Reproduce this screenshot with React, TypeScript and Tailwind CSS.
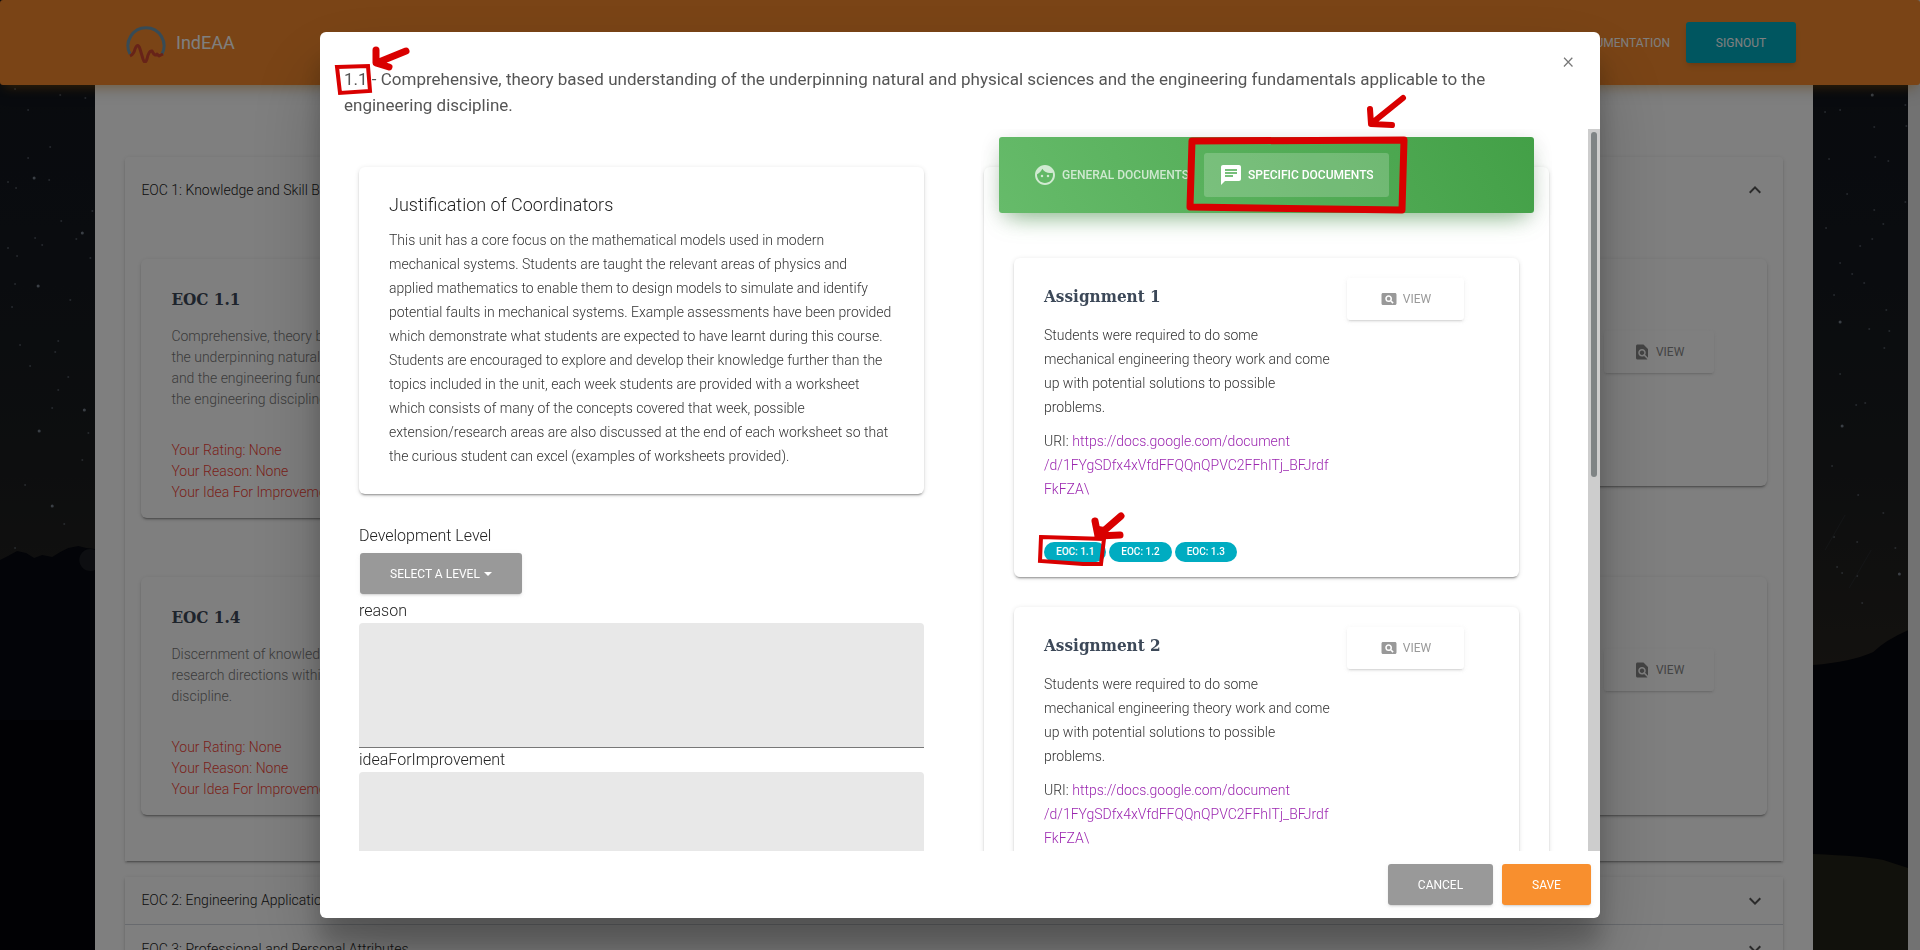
import React from "react";
import { MdFace, MdChat, MdPageview, MdFindInPage, MdExpandLess, MdExpandMore } from "react-icons/md";

const CARD_SHADOW =
  "shadow-[0_2px_2px_0_rgba(0,0,0,0.14),0_3px_1px_-2px_rgba(0,0,0,0.2),0_1px_5px_0_rgba(0,0,0,0.12)]";
const BUTTON_SHADOW =
  "shadow-[0_2px_2px_0_rgba(153,153,153,0.14),0_3px_1px_-2px_rgba(153,153,153,0.2),0_1px_5px_0_rgba(153,153,153,0.12)]";
const SLAB = "font-['Roboto_Slab','DejaVu_Serif_Condensed','DejaVu_Serif',serif]";

const LEFT_STARS: [number, number, number][] = [
  [15, 89, 1], [28, 110, 1], [60, 95, 1], [85, 98, 1], [50, 147, 1], [28, 158, 1], [34, 178, 2], [8, 182, 1],
  [16, 188, 1], [49, 180, 1], [92, 211, 1], [61, 221, 1], [82, 233, 2], [35, 238, 1], [42, 245, 1], [8, 248, 1],
  [17, 256, 1], [76, 239, 1], [90, 258, 1], [38, 286, 2], [15, 284, 1], [12, 307, 1], [58, 341, 1], [55, 352, 1],
  [30, 366, 1], [52, 408, 1], [84, 410, 2], [39, 431, 2], [58, 390, 1], [68, 377, 1], [82, 460, 1], [25, 485, 1],
  [52, 506, 2], [15, 548, 1], [64, 524, 1], [88, 433, 1], [20, 345, 1], [70, 300, 1],
];
const RIGHT_STARS: [number, number, number][] = [
  [27, 110, 1], [59, 95, 2], [12, 112, 1], [92, 105, 1], [61, 127, 1], [93, 126, 1], [16, 159, 1], [62, 157, 1],
  [75, 161, 1], [34, 194, 1], [92, 202, 1], [61, 210, 1], [70, 224, 1], [13, 228, 1], [59, 239, 1], [47, 246, 1],
  [27, 263, 1], [39, 274, 1], [51, 283, 1], [21, 295, 1], [73, 310, 1], [27, 322, 2], [56, 329, 1], [76, 331, 1],
  [71, 348, 1], [27, 374, 1], [43, 405, 1], [52, 403, 1], [29, 426, 2], [19, 466, 1], [45, 495, 1], [70, 513, 1],
  [21, 537, 1], [44, 542, 1], [82, 548, 1], [24, 567, 1], [29, 573, 1], [86, 574, 2], [44, 576, 1], [49, 603, 1],
];

function Stars({ items }: { items: [number, number, number][] }) {
  return (
    <g fill="#7f8a96">
      {items.map(([x, y, r]) => (
        <circle key={`${x}-${y}`} cx={x} cy={y} r={r === 2 ? 1.5 : 1} opacity={r === 2 ? 0.9 : 0.5} />
      ))}
    </g>
  );
}

function NightSky({ side }: { side: "left" | "right" }) {
  const left = side === "left";
  return (
    <svg className="block h-screen w-full" viewBox="0 0 95 950" preserveAspectRatio="none" aria-hidden="true">
      <defs>
        <linearGradient id={`sky-${side}`} x1="0" y1="0" x2="0" y2="1">
          <stop offset="0" stopColor="#10141c" />
          <stop offset="0.3" stopColor="#15191f" />
          <stop offset="0.5" stopColor="#1b1d1f" />
          <stop offset="0.7" stopColor="#26231e" />
        </linearGradient>
      </defs>
      <rect width="95" height="950" fill={`url(#sky-${side})`} />
      {left ? (
        <>
          <Stars items={LEFT_STARS} />
          <path
            d="M0 560 L8 556 L17 551 L26 553 L34 558 L42 555 L52 557 L60 552 L68 548 L78 546 L86 548 L95 549 V950 H0Z"
            fill="#060810"
          />
          <circle cx="90" cy="560" r="11" fill="#1a1d22" />
          <path d="M0 720 H95 V950 H0Z" fill="#030308" />
        </>
      ) : (
        <>
          <Stars items={RIGHT_STARS} />
          <path d="M32 515 L12 550 M58 550 L36 588" stroke="#2c2f33" strokeWidth="0.7" />
          <path d="M0 665 Q38 662 60 652 Q72 640 95 630 V870 H0Z" fill="#05060c" />
          <path d="M0 854 Q50 856 70 860 Q82 864 95 868 V950 H0Z" fill="#232218" />
        </>
      )}
    </svg>
  );
}

function EocCard({ title, text }: { title: string; text: string }) {
  return (
    <article className={`rounded-md bg-white px-[30px] pt-7 pb-[15px] ${CARD_SHADOW}`}>
      <div className="w-[300px]">
        <h4 className={`${SLAB} text-[17px] leading-6 font-bold text-[#3c4858]`}>{title}</h4>
        <p className="mt-[15px] text-[14px] leading-[21px] text-[#777]">{text}</p>
        <p className="mt-[30px] text-[14px] leading-[21px] text-[#f44336]">
          Your Rating: None
          <br />
          Your Reason: None
          <br />
          Your Idea For Improvement: None
        </p>
      </div>
    </article>
  );
}

function EocViewCard({ children }: { children?: React.ReactNode }) {
  return (
    <article className={`flex min-h-[227px] items-start justify-end rounded-md bg-white px-[53px] pt-[72px] ${CARD_SHADOW}`}>
      <button
        type="button"
        className={`flex h-[42px] w-[110px] items-center justify-center gap-[5px] rounded-[3px] bg-white text-[12px] font-normal text-[#888] ${BUTTON_SHADOW}`}
      >
        <MdFindInPage size={18} />
        VIEW
      </button>
      {children}
    </article>
  );
}

function AccordionRow({ children }: { children: React.ReactNode }) {
  return (
    <button type="button" className="flex h-12 w-full items-center justify-between px-4 text-left text-[14px] text-[#222]">
      <span>{children}</span>
      <MdExpandMore size={24} className="text-[#555]" />
    </button>
  );
}

function DocumentCard({ title }: { title: string }) {
  return (
    <article className={`rounded-md bg-white px-[30px] pt-5 pb-[15px] ${CARD_SHADOW}`}>
      <div className="flex">
        <div className="w-[303px] text-[14px] leading-[24px] text-[#333]">
          <h4 className={`${SLAB} mt-[6px] text-[17px] font-bold text-[#3c4858]`}>{title}</h4>
          <p className="mt-[15px] w-[287px]">
            Students were required to do some mechanical engineering theory work and come up with potential solutions to
            possible problems.
          </p>
          <p className="mt-[10px] w-[287px]">
            URI:{" "}
            <a href="#document" className="break-words text-[#9c27b0]">
              https://docs.google.com/document
              <wbr />
              /d/1FYgSDfx4xVfdFFQQnQPVC2FFhITj_BFJrdf
              <wbr />
              FkFZA\
            </a>
          </p>
        </div>
        <button
          type="button"
          className={`flex h-[42px] w-[117px] items-center justify-center gap-[5px] rounded-[3px] bg-white text-[12px] font-normal text-[#999] ${BUTTON_SHADOW}`}
        >
          <MdPageview size={18} />
          VIEW
        </button>
      </div>
      <ul className="mt-[41px] flex gap-[3px] text-[10px] leading-5 font-medium text-white">
        <li className="relative rounded-full bg-[#00acc1] px-3">
          EOC: 1.1
          {title === "Assignment 1" && <BadgeMark />}
        </li>
        <li className="rounded-full bg-[#00acc1] px-3">EOC: 1.2</li>
        <li className="rounded-full bg-[#00acc1] px-3">EOC: 1.3</li>
      </ul>
    </article>
  );
}

const MARK = "pointer-events-none absolute z-10 overflow-visible";

function BadgeMark() {
  return (
    <svg className={`${MARK} -top-7 -left-2`} width="90" height="56" fill="none" stroke="#d90000" aria-hidden="true">
      <path d="M5 23 L68 25 L65 50 L47 50 L4 47 Z" strokeWidth="4" />
      <path d="M85 2 L62 22 M59 7 L62 22 L84 21" strokeWidth="7" strokeLinecap="round" strokeLinejoin="round" />
      <path d="M59 12 L72 14 L66 26 Z" fill="#d90000" />
    </svg>
  );
}

function TitleMark() {
  return (
    <svg className={`${MARK} -top-5 -left-2`} width="75" height="50" fill="none" stroke="#d90000" aria-hidden="true">
      <path d="M1 18 L32 17 L34 42 L4 44 Z" strokeWidth="4" />
      <path d="M70 2 L43 13 M40 1 L40 14 L53 18" strokeWidth="7" strokeLinecap="round" strokeLinejoin="round" />
    </svg>
  );
}

function TabMark() {
  return (
    <svg className={`${MARK} -top-4 -left-4`} width="220" height="76" fill="none" stroke="#d90000" aria-hidden="true">
      <path d="M4 4 L216 3 L214 73 L2 70 Z" strokeWidth="7" strokeLinejoin="round" />
    </svg>
  );
}

function TabArrow() {
  return (
    <svg className={`${MARK} right-[192px] bottom-0`} width="42" height="34" fill="none" stroke="#d90000" aria-hidden="true">
      <path d="M37 3 L6 28 M4 14 L5 29 L26 30" strokeWidth="6" strokeLinecap="round" strokeLinejoin="round" />
    </svg>
  );
}

function Logo() {
  return (
    <svg width="40" height="40" viewBox="0 0 40 40" fill="none" aria-hidden="true">
      <path d="M4 31 A18 18 0 1 1 36 31" stroke="#6f96ac" strokeWidth="3" />
      <path
        d="M4 33 Q8 31 9 26 Q12 19 14 26 L17 36 Q19 42 21 36 Q23 27 26 28 Q29 34 31 31 L33 33 L37 31"
        stroke="#cf4630"
        strokeWidth="3"
        strokeLinejoin="round"
      />
    </svg>
  );
}

export default function App() {
  return (
    <div className="relative h-screen overflow-hidden bg-black font-['Roboto',sans-serif] font-light">
      <header className="relative z-10 flex h-[85px] items-center justify-between rounded-[3px] bg-[#f4892c] px-[124px] text-white shadow-[0_4px_20px_0_rgba(0,0,0,0.14),0_7px_10px_-5px_rgba(255,152,0,0.4)]">
        <a href="#home" className="flex items-center gap-[10px] pl-[2px] text-[18px] font-normal">
          <Logo />
          IndEAA
        </a>
        <nav className="flex items-center gap-4 text-[12px] font-normal">
          <a href="#documentation">DOCUMENTATION</a>
          <button type="button" className="h-[41px] w-[110px] rounded-[3px] bg-[#00acc1] shadow-md">
            SIGNOUT
          </button>
        </nav>
      </header>

      <div className="-mt-[85px] flex">
        <div className="grid h-screen flex-1 grid-cols-[minmax(0,1fr)_minmax(0,18fr)_minmax(0,1fr)] overflow-hidden">
          <NightSky side="left" />
          <main className="bg-white px-[30px] pt-[157px]">
            <section className={`px-4 pb-[46px] ${CARD_SHADOW} rounded-t-[4px]`}>
              <button type="button" className="flex h-[66px] w-full items-center justify-between text-left text-[14px] text-[#222]">
                <span>EOC 1: Knowledge and Skill Base</span>
                <MdExpandLess size={24} className="text-[#555]" />
              </button>
              <div className="mt-9 flex flex-col gap-[59px]">
                <div className="grid grid-cols-2 items-start gap-[30px]">
                  <EocCard
                    title="EOC 1.1"
                    text="Comprehensive, theory based understanding of the underpinning natural and physical sciences and the engineering fundamentals applicable to the engineering discipline."
                  />
                  <EocViewCard />
                </div>
                <div className="grid grid-cols-2 gap-[30px]">
                  <EocCard
                    title="EOC 1.4"
                    text="Discernment of knowledge development and research directions within the engineering discipline."
                  />
                  <EocViewCard />
                </div>
              </div>
            </section>
            <section className={`mt-4 divide-y divide-gray-300 ${CARD_SHADOW}`}>
              <AccordionRow>EOC 2: Engineering Application Ability</AccordionRow>
              <AccordionRow>EOC 3: Professional and Personal Attributes</AccordionRow>
            </section>
          </main>
          <NightSky side="right" />
        </div>
        <div className="w-3 bg-[#e4e4e4]" />
      </div>

      <div className="fixed inset-0 z-20 flex justify-center bg-black/50 py-8">
        <div
          role="dialog"
          aria-label="EOC 1.1"
          className="flex w-2/3 flex-col rounded-md bg-white shadow-[0_27px_24px_0_rgba(0,0,0,0.2),0_40px_77px_0_rgba(0,0,0,0.22)]"
        >
          <div className="relative h-[97px] shrink-0 px-6 pt-[34px]">
            <h2 className="max-w-[1160px] text-[17px] leading-[26px] font-normal text-[#555]">
              <span className="relative">
                1.1
                <TitleMark />
              </span>{" "}
              - Comprehensive, theory based understanding of the underpinning natural and physical sciences and the
              engineering fundamentals applicable to the engineering discipline.
            </h2>
            <button type="button" aria-label="Close" className="absolute top-[17px] right-[26px] text-[22px] leading-6 text-[#777]">
              ×
            </button>
            <TabArrow />
          </div>

          <div className="flex min-h-0 flex-1">
            <div className="grid min-w-0 flex-1 grid-cols-2 gap-[60px] overflow-hidden px-[39px] pt-[38px]">
              <form className="text-[#222]">
                <section className={`rounded-md px-[30px] pt-[25px] pb-[26px] ${CARD_SHADOW}`}>
                  <h3 className="text-[18px] leading-[26px]">Justification of Coordinators</h3>
                  <p className="mt-[10px] text-[14px] leading-[24px] text-[#333]">
                    This unit has a core focus on the mathematical models used in modern mechanical systems. Students
                    are taught the relevant areas of physics and applied mathematics to enable them to design models to
                    simulate and identify potential faults in mechanical systems. Example assessments have been provided
                    which demonstrate what students are expected to have learnt during this course. Students are
                    encouraged to explore and develop their knowledge further than the topics included in the unit, each
                    week students are provided with a worksheet which consists of many of the concepts covered that
                    week, possible extension/research areas are also discussed at the end of each worksheet so that the
                    curious student can excel (examples of worksheets provided).
                  </p>
                </section>
                <p className="mt-[30px] text-[16px] leading-6">Development Level</p>
                <button
                  type="button"
                  className={`mt-[5px] ml-px flex h-[41px] w-[162px] items-center justify-center gap-1 rounded-[3px] bg-[#999] text-[12px] font-normal text-white ${BUTTON_SHADOW}`}
                >
                  SELECT A LEVEL
                  <svg width="8" height="4" viewBox="0 0 8 4" fill="currentColor" aria-hidden="true">
                    <path d="M0 0 H8 L4 4Z" />
                  </svg>
                </button>
                <label htmlFor="reason" className="mt-[5px] block text-[16px] leading-6">
                  reason
                </label>
                <textarea
                  id="reason"
                  className="block h-[125px] w-full resize-none rounded-t-[4px] border-b border-[#777] bg-[#e8e8e8]"
                />
                <label htmlFor="idea" className="block text-[16px] leading-6">
                  ideaForImprovement
                </label>
                <textarea
                  id="idea"
                  className="block h-[125px] w-full resize-none rounded-t-[4px] border-b border-[#777] bg-[#e8e8e8]"
                />
              </form>

              <section className={`h-max rounded-md px-[15px] ${CARD_SHADOW}`}>
                <div className="-mt-[30px] flex h-[76px] items-center rounded-[3px] bg-[linear-gradient(60deg,#66bb6a,#43a047)] px-[19px] text-[12px] font-medium text-white shadow-[0_5px_20px_0_rgba(0,0,0,0.14),0_13px_24px_-11px_rgba(76,175,80,0.6)]">
                  <button type="button" className="flex h-11 w-[186px] items-center gap-[5px] px-[15px] whitespace-nowrap text-white/70">
                    <MdFace size={24} className="shrink-0" />
                    GENERAL DOCUMENTS
                  </button>
                  <button type="button" className="relative flex h-11 w-[185px] items-center gap-[5px] rounded-[3px] bg-white/20 px-[15px] whitespace-nowrap">
                    <MdChat size={24} className="shrink-0" />
                    SPECIFIC DOCUMENTS
                    <TabMark />
                  </button>
                </div>
                <div className="flex flex-col gap-[30px] px-[15px] pt-[45px] pb-[30px]">
                  <DocumentCard title="Assignment 1" />
                  <DocumentCard title="Assignment 2" />
                </div>
              </section>
            </div>
            <div className="w-3 bg-[#cdcdcd] p-[3px]">
              <div className="h-[345px] rounded-full bg-[#7f8485]" />
            </div>
          </div>

          <div className="flex h-[67px] shrink-0 items-center justify-end gap-[9px] px-[9px] text-[12px] font-normal text-white">
            <button type="button" className={`h-[41px] w-[105px] rounded-[3px] bg-[#999] ${BUTTON_SHADOW}`}>
              CANCEL
            </button>
            <button type="button" className={`h-[41px] w-[89px] rounded-[3px] bg-[#f88f2e] ${BUTTON_SHADOW}`}>
              SAVE
            </button>
          </div>
        </div>
      </div>
    </div>
  );
}
